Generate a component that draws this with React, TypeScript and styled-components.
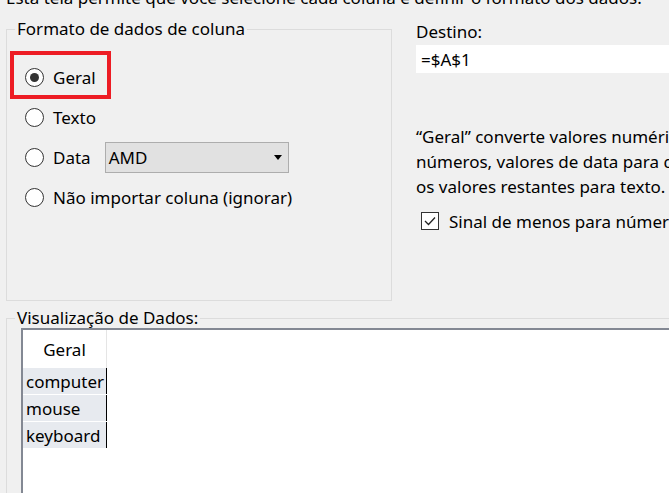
import React from 'react';
import styled, { createGlobalStyle } from 'styled-components';

const GlobalStyle = createGlobalStyle`
  html, body {
    margin: 0;
    padding: 0;
    background: #f0f0f0;
    width: 669px;
    height: 493px;
    overflow: hidden;
  }
  body {
    font-family: "Noto Sans", "Open Sans", sans-serif;
    font-size: 17px;
    color: #000;
  }
`;

const Dialog = styled.div`
  width: 669px;
  height: 493px;
  overflow: hidden;
  padding-left: 6px;
  box-sizing: border-box;
`;

const Intro = styled.div`
  margin-top: -14px;
  height: 24px;
  line-height: 24px;
  white-space: nowrap;
`;

const Upper = styled.div`
  display: flex;
  gap: 24px;
  margin-top: 7px;
`;

const Group = styled.fieldset<{ $width?: number; $height?: number }>`
  margin: 0;
  padding: 0;
  border: 1px solid #dcdcdc;
  box-sizing: border-box;
  width: ${(p) => (p.$width ? `${p.$width}px` : 'auto')};
  height: ${(p) => (p.$height ? `${p.$height}px` : 'auto')};
  min-width: 0;
  flex-shrink: 0;
`;

const Legend = styled.legend`
  margin-left: 8px;
  padding: 0 2px;
  line-height: 24px;
  white-space: nowrap;
`;

const RadioList = styled.div`
  display: flex;
  flex-direction: column;
  padding: 16px 0 0 18px;
`;

const RadioRow = styled.div<{ $highlighted?: boolean }>`
  position: relative;
  display: flex;
  align-items: center;
  height: 40px;
  gap: 9px;
  white-space: nowrap;

  ${(p) =>
    p.$highlighted &&
    `
    &::before {
      content: '';
      position: absolute;
      left: -15px;
      top: -6px;
      width: 101px;
      height: 48px;
      box-sizing: border-box;
      border: 4px solid #ed1c24;
    }
  `}
`;

const Radio = styled.span<{ $checked?: boolean }>`
  width: 19px;
  height: 19px;
  box-sizing: border-box;
  border-radius: 50%;
  border: 1px solid #333;
  background: #fff;
  display: flex;
  align-items: center;
  justify-content: center;
  flex-shrink: 0;

  &::after {
    content: '';
    width: 9px;
    height: 9px;
    border-radius: 50%;
    background: ${(p) => (p.$checked ? '#333' : 'transparent')};
  }
`;

const Combo = styled.div`
  margin-left: 5px;
  width: 184px;
  height: 31px;
  box-sizing: border-box;
  border: 1px solid #adadad;
  background: #e1e1e1;
  display: flex;
  align-items: center;
  justify-content: space-between;
  padding: 0 6px 0 3px;
`;

const Arrow = styled.span`
  width: 0;
  height: 0;
  border-left: 4px solid transparent;
  border-right: 4px solid transparent;
  border-top: 5px solid #000;
`;

const Side = styled.div`
  display: flex;
  flex-direction: column;
  flex: 1;
  min-width: 0;
  padding-top: 3px;
`;

const Label = styled.div`
  line-height: 24px;
  white-space: nowrap;
`;

const Field = styled.div`
  margin-top: 1px;
  height: 28px;
  background: #fff;
  display: flex;
  align-items: center;
  padding-left: 5px;
  white-space: nowrap;
`;

const Description = styled.div`
  margin-top: 51px;
  line-height: 25px;
  white-space: nowrap;
`;

const CheckRow = styled.div`
  display: flex;
  align-items: center;
  height: 24px;
  gap: 10px;
  margin-top: 10px;
  padding-left: 5px;
  white-space: nowrap;
`;

const Check = styled.span`
  width: 18px;
  height: 18px;
  box-sizing: border-box;
  border: 1px solid #333;
  background: #fff;
  display: flex;
  align-items: center;
  justify-content: center;
  flex-shrink: 0;
`;

const Lower = styled(Group)`
  margin-top: 5px;
  width: 700px;
  height: 200px;
`;

const Preview = styled.div`
  margin: -2px 0 0 14px;
  height: 200px;
  background: #fff;
  border-top: 2px solid #838893;
  border-left: 2px solid #838893;
  display: flex;
`;

const Column = styled.div`
  display: flex;
  flex-direction: column;
  width: 84px;
`;

const HeaderCell = styled.div`
  height: 38px;
  display: flex;
  align-items: center;
  justify-content: center;
  border-right: 1px solid #e5e5e5;
`;

const Cell = styled.div`
  height: 26px;
  margin-bottom: 1px;
  background: #e7eaef;
  border-right: 1px solid #000;
  display: flex;
  align-items: center;
  padding-left: 3px;
  white-space: nowrap;
`;

const rows = ['computer', 'mouse', 'keyboard'];

export default function App() {
  return (
    <>
      <GlobalStyle />
      <Dialog>
        <Intro>
          Esta tela permite que você selecione cada coluna e definir o formato dos dados.
        </Intro>
        <Upper>
          <Group $width={386} $height={284}>
            <Legend>Formato de dados de coluna</Legend>
            <RadioList>
              <RadioRow $highlighted>
                <Radio $checked />
                Geral
              </RadioRow>
              <RadioRow>
                <Radio />
                Texto
              </RadioRow>
              <RadioRow>
                <Radio />
                Data
                <Combo>
                  AMD
                  <Arrow />
                </Combo>
              </RadioRow>
              <RadioRow>
                <Radio />
                Não importar coluna (ignorar)
              </RadioRow>
            </RadioList>
          </Group>
          <Side>
            <Label>Destino:</Label>
            <Field>=$A$1</Field>
            <Description>
              “Geral” converte valores numéricos em
              <br />
              números, valores de data para datas e todos
              <br />
              os valores restantes para texto.
            </Description>
            <CheckRow>
              <Check>
                <svg width="12" height="10" viewBox="0 0 12 10">
                  <path d="M1 5 L4.5 8.5 L11 1.5" fill="none" stroke="#222" strokeWidth="1.3" />
                </svg>
              </Check>
              Sinal de menos para números negativos à direita
            </CheckRow>
          </Side>
        </Upper>
        <Lower>
          <Legend>Visualização de Dados:</Legend>
          <Preview>
            <Column>
              <HeaderCell>Geral</HeaderCell>
              {rows.map((r) => (
                <Cell key={r}>{r}</Cell>
              ))}
            </Column>
          </Preview>
        </Lower>
      </Dialog>
    </>
  );
}
